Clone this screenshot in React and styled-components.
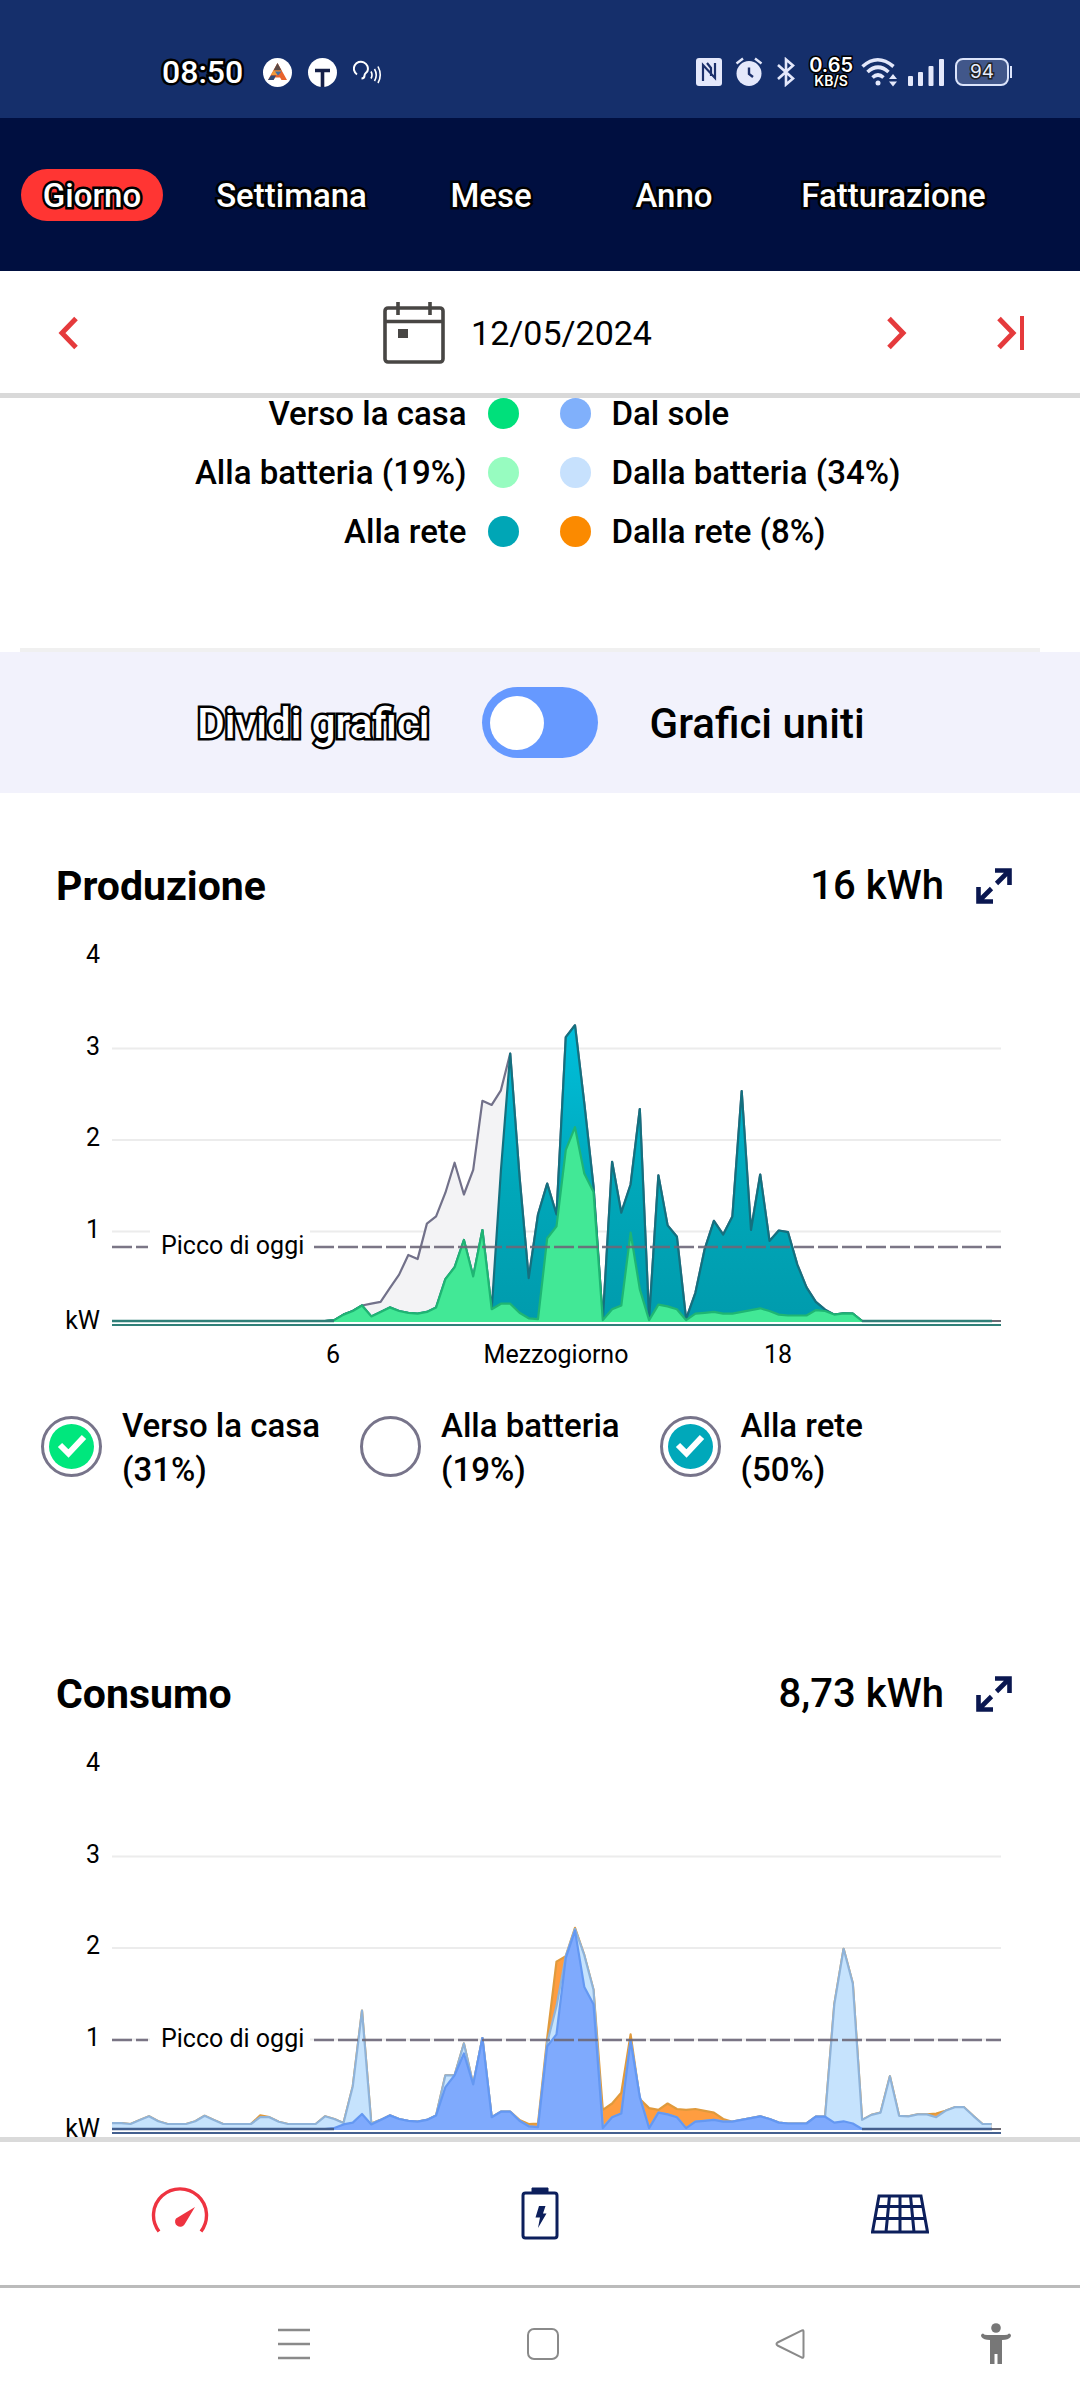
import React, { useState } from "react";
import styled, { createGlobalStyle, css } from "styled-components";

const GlobalStyle = createGlobalStyle`
  *, *::before, *::after { box-sizing: border-box; }
  body {
    margin: 0;
    background: #fff;
    color: #000;
    font-family: Roboto, "Liberation Sans", sans-serif;
  }
  button { font: inherit; color: inherit; background: none; border: 0; padding: 0; cursor: pointer; }
`;

const outline = css`
  -webkit-text-stroke: 5px #000;
  paint-order: stroke fill;
`;

const Page = styled.div`
  display: flex;
  flex-direction: column;
  height: 100vh;
`;

/* ---------- status bar ---------- */

const StatusBar = styled.div`
  display: flex;
  align-items: center;
  justify-content: space-between;
  height: 118px;
  padding: 26px 68px 0 162px;
  background: #152f6b;
  color: #fff;
  flex: none;
`;

const StatusGroup = styled.div`
  display: flex;
  align-items: center;
  gap: ${(p) => p.$gap}px;
`;

const Clock = styled.span`
  font-size: 32px;
  font-weight: 500;
  line-height: 36px;
  margin-right: 4px;
  ${outline}
`;

const Speed = styled.span`
  display: flex;
  flex-direction: column;
  align-items: center;
  font-family: Inter, "Open Sans", sans-serif;
  font-weight: 600;
  font-size: 20px;
  line-height: 18px;
  -webkit-text-stroke: 3px #000;
  paint-order: stroke fill;
`;

const SpeedUnit = styled.span`
  font-size: 14px;
  line-height: 14px;
`;

const BatteryLevel = styled.span`
  display: flex;
  align-items: center;
  justify-content: center;
  width: 54px;
  height: 28px;
  border: 2px solid #dbe4fb;
  border-radius: 8px;
  background: #41578a;
  color: #e6edff;
  font-family: Inter, "Open Sans", sans-serif;
  font-size: 19px;
  line-height: 22px;
  -webkit-text-stroke: 3px #222;
  paint-order: stroke fill;
`;

const BatteryTip = styled.span`
  width: 2px;
  height: 12px;
  margin-left: 1px;
  background: #dbe4fb;
`;

const Battery = styled.span`
  display: flex;
  align-items: center;
`;

/* ---------- period tabs ---------- */

const Periods = styled.nav`
  display: grid;
  grid-template-columns: 184fr 215fr 184fr 182fr 257fr;
  align-items: center;
  justify-items: center;
  height: 153px;
  padding-right: 58px;
  background: #000f40;
  flex: none;
`;

const Period = styled.button`
  height: 52px;
  padding: 1px 22px 0;
  border-radius: 26px;
  background: ${(p) => (p.$active ? "#ff3533" : "transparent")};
  color: #fff;
  font-size: 33px;
  font-weight: 500;
  line-height: 52px;
  ${outline}
`;

/* ---------- date row ---------- */

const DateBar = styled.div`
  display: flex;
  align-items: center;
  height: 127px;
  padding: 2px 39px 0 38px;
  border-bottom: 5px solid #d9d9d9;
  flex: none;
`;

const IconButton = styled.button`
  display: flex;
  align-items: center;
  justify-content: center;
  width: 60px;
  height: 60px;
`;

const DatePick = styled.button`
  display: flex;
  align-items: center;
  gap: 26px;
`;

const DateCenter = styled.div`
  display: flex;
  flex: 1;
  justify-content: center;
  padding-left: 70px;
`;

const DateText = styled.span`
  font-size: 34px;
  line-height: 40px;
`;

const DateNext = styled.div`
  display: flex;
  gap: 54px;
`;

/* ---------- scrolling content ---------- */

const Main = styled.main`
  flex: 1;
  min-height: 0;
  overflow-y: auto;
  scrollbar-width: none;
`;

const Legend = styled.div`
  display: grid;
  grid-template-columns: 1fr 1fr;
  gap: 28px 41px;
  padding: 0 2px 101px 0;
`;

const LegendItem = styled.div`
  display: flex;
  flex-direction: ${(p) => (p.$right ? "row-reverse" : "row")};
  align-items: center;
  gap: 21px;
  font-size: 33px;
  font-weight: 500;
  line-height: 31px;
`;

const Dot = styled.span`
  width: 31px;
  height: 31px;
  border-radius: 50%;
  background: ${(p) => p.$color};
`;

const Rule = styled.hr`
  height: 4px;
  margin: 0 40px 0 20px;
  border: 0;
  background: #f0f0f0;
`;

const SwitchBand = styled.div`
  display: flex;
  align-items: center;
  justify-content: center;
  gap: 52px;
  height: 141px;
  padding-right: 18px;
  background: #f2f2fc;
`;

const SwitchLabel = styled.label`
  padding-top: 2px;
  font-size: 42px;
  font-weight: 500;
  line-height: 48px;
  ${(p) =>
    p.$selected &&
    css`
      color: #fff;
      ${outline}
    `}
`;

const Switch = styled.input`
  appearance: none;
  display: flex;
  align-items: center;
  width: 116px;
  height: 71px;
  margin: 0;
  padding: 0 8px;
  border-radius: 36px;
  background: #6699ff;
  cursor: pointer;

  &::before {
    content: "";
    width: 54px;
    height: 54px;
    border-radius: 50%;
    background: #fff;
  }
  &:checked { justify-content: flex-end; }
`;

const Panel = styled.section`
  padding: 55px 0 109px;
`;

const PanelHead = styled.header`
  display: flex;
  align-items: center;
  height: 76px;
  padding: 0 56px;
`;

const PanelTitle = styled.h2`
  flex: 1;
  margin: 0;
  font-size: 41px;
  font-weight: 700;
  line-height: 48px;
`;

const PanelTotal = styled.span`
  margin-right: 20px;
  font-size: 40px;
  font-weight: 500;
  line-height: 48px;
`;

const ChartSvg = styled.svg`
  display: block;
  width: 100%;
  height: auto;
  font-family: Roboto, "Liberation Sans", sans-serif;
  font-size: 25px;
`;

const Filters = styled.div`
  display: flex;
  gap: 40px;
  margin-top: 20px;
  padding: 0 41px;
`;

const Filter = styled.label`
  display: flex;
  align-items: center;
  gap: 20px;
  font-size: 33px;
  font-weight: 500;
  line-height: 44px;
  cursor: pointer;
`;

const FilterText = styled.span`
  display: flex;
  flex-direction: column;
  padding-top: 4px;
`;

const CheckBox = styled.span`
  display: grid;
  place-items: center;
  > * { grid-area: 1 / 1; }
  svg { pointer-events: none; }
`;

const CheckInput = styled.input`
  appearance: none;
  width: 61px;
  height: 61px;
  margin: 0;
  border: 3px solid #77748a;
  border-radius: 50%;
  cursor: pointer;

  &:checked {
    padding: 5px;
    background: ${(p) => p.$color} content-box;
  }
`;

/* ---------- bottom bars ---------- */

const TabBar = styled.nav`
  display: grid;
  grid-template-columns: repeat(3, 1fr);
  height: 151px;
  border-top: 5px solid #dadada;
  border-bottom: 3px solid #bbb;
  background: #fff;
  flex: none;
`;

const Tab = styled.button`
  display: flex;
  align-items: center;
  justify-content: center;
`;

const SystemBar = styled.div`
  display: grid;
  grid-template-columns: 170fr 248fr 250fr 244fr 168fr;
  align-items: center;
  height: 112px;
  flex: none;
`;

const SystemButton = styled.button`
  display: flex;
  align-items: center;
  justify-content: center;
  height: 60px;
`;

/* ---------- chart data (kW, one value every 15 minutes) ---------- */

const pad = (lead, values) => {
  const row = [...Array(lead).fill(0), ...values];
  while (row.length < 96) row.push(0);
  return row;
};

const toHome = pad(24, [
  0.01, 0.07, 0.11, 0.17, 0.05, 0.1, 0.15, 0.11, 0.09, 0.08, 0.1, 0.15, 0.46, 0.59, 0.89, 0.49, 1.0, 0.13, 0.19, 0.19,
  0.09, 0.03, 0.02, 0.91, 1.04, 1.88, 2.13, 1.62, 1.42, 0.01, 0.13, 0.17, 0.97, 0.35, 0.01, 0.18, 0.16, 0.13, 0.01,
  0.08, 0.09, 0.1, 0.08, 0.08, 0.1, 0.12, 0.14, 0.11, 0.07, 0.06, 0.06, 0.06, 0.12, 0.11, 0.07, 0.085, 0.08, 0,
]);

const toGridTail = [
  1.59, 0.47, 1.17, 1.51, 1.17, 3.12, 3.25, 2.39, 1.48, 0.01, 1.75, 1.19, 1.5, 2.33, 0.02, 1.6, 1.05, 0.925, 0.02, 0.31,
  0.79, 1.1, 0.95, 1.15, 2.525, 1.0, 1.61, 0.88, 0.995, 0.976, 0.62, 0.37, 0.21, 0.125, 0.07, 0.085, 0.08, 0,
];

const toGrid = pad(0, [...toHome.slice(0, 42), 1.65, 2.94, ...toGridTail]);

const produced = pad(24, [
  0.01, 0.07, 0.11, 0.17, 0.19, 0.21, 0.36, 0.51, 0.725, 0.68, 1.07, 1.15, 1.41, 1.74, 1.39, 1.66, 2.42, 2.375, 2.535,
  2.94, ...toGridTail,
]);

const fromSun = pad(0, [
  ...toHome.slice(0, 25), 0.05, 0.07, 0.165, 0.05, ...toHome.slice(29, 38), 0.83, ...toHome.slice(39, 50), 2.18, 1.56,
  1.37, ...toHome.slice(53, 76), 0.135, 0.135, 0.07, 0.085, 0.06,
]);

const fromBattery = pad(0, [
  0.065, 0.065, 0.055, 0.1, 0.14, 0.085, 0.055, 0.055, 0.055, 0.085, 0.145, 0.1, 0.055, 0.055, 0.055, 0.055, 0.13, 0.13,
  0.08, 0.055, 0.055, 0.055, 0.055, 0.14, 0.11, 0.065, 0.47, 1.3, 0.06, ...fromSun.slice(29, 36), 0.59, 0.59, 0.94,
  ...fromSun.slice(39, 47), 0.95, 1.35, 1.9, 2.2, 1.91, 1.53, 0.02, ...fromSun.slice(54, 77), 0.135, 1.37, 1.98, 1.6, 0.1,
  0.155, 0.18, 0.58, 0.145, 0.14, 0.16, 0.16, 0.13, 0.2, 0.24, 0.24, 0.145, 0.055, 0.055,
]);

const fromGrid = fromBattery.map((v, i) => {
  const extra = {
    16: 0.15, 44: 0.1, 45: 0.055, 46: 0.06, 47: 1.0, 48: 1.84, 49: 1.9, 50: 2.21, 53: 0.21, 54: 0.28, 55: 0.4, 56: 1.04,
    57: 0.33, 58: 0.23, 59: 0.21, 60: 0.28, 61: 0.22, 62: 0.21, 63: 0.22, 64: 0.2, 65: 0.18, 66: 0.11, 89: 0.17,
  };
  return extra[i] ?? v;
});

const LEFT = 112;
const RIGHT = 1001;
const ZERO = 397;
const UNIT = 91;
const STEP = (RIGHT - LEFT) / 96;

const linePath = (values) =>
  values
    .map((v, i) => `${i ? "L" : "M"}${(LEFT + i * STEP).toFixed(1)} ${(ZERO - v * UNIT).toFixed(1)}`)
    .join("");

function Area({ values, fill, stroke }) {
  const d = linePath(values);
  return (
    <>
      <path d={`${d}V${ZERO + 1}H${LEFT}Z`} fill={fill} />
      <path d={d} fill="none" stroke={stroke} strokeWidth="2.2" strokeLinejoin="round" />
    </>
  );
}

function Chart({ label, peak, areas, axisColor, flatSpans }) {
  return (
    <ChartSvg viewBox="0 0 1080 456" role="img" aria-label={label}>
      <defs>
        <linearGradient id="tealFade" gradientUnits="userSpaceOnUse" x1="0" y1="100" x2="0" y2="398">
          <stop offset="0" stopColor="#00bfdc" />
          <stop offset="0.55" stopColor="#00a7b9" />
          <stop offset="1" stopColor="#009bad" />
        </linearGradient>
      </defs>
      {[1, 2, 3].map((n) => (
        <path key={n} d={`M${LEFT} ${399 - n * 91.5}H${RIGHT}`} stroke="#ececec" strokeWidth="2" />
      ))}
      <path d={`M${LEFT} ${ZERO}H${RIGHT}`} stroke="#6c6a74" strokeWidth="2" />
      {areas.map((a) => (
        <Area key={a.stroke} {...a} />
      ))}
      <path d={flatSpans} stroke={axisColor} strokeWidth="2.400" />
      <path d={`M${LEFT} 401H${RIGHT}`} stroke={axisColor} strokeWidth="2" />
      <rect x="150" y={peak - 18} width="160" height="34" fill="#fff" />
      <path d={`M${LEFT} ${peak}H148M314 ${peak}H${RIGHT}`} stroke="#6d6879" strokeWidth="2.400" strokeDasharray="20 4" opacity="0.9" />
      <text x="161" y={peak + 7}>Picco di oggi</text>
      <g textAnchor="end">
        {[4, 3, 2, 1].map((n) => (
          <text key={n} x="100" y={405 - n * 91.5}>{n}</text>
        ))}
        <text x="100" y="405">kW</text>
      </g>
      <g textAnchor="middle">
        <text x="333" y="439">6</text>
        <text x="556" y="439">Mezzogiorno</text>
        <text x="778" y="439">18</text>
      </g>
    </ChartSvg>
  );
}

/* ---------- icons ---------- */

const Chevron = ({ flip, end }) => (
  <svg width="36" height="36" viewBox="0 0 36 36" fill="none" stroke="#e53a3c" strokeWidth="5">
    {flip ? <path d="M26 3.500 12 18l14 14.500" /> : <path d={end ? "M6 3.500 20 18 6 32.500" : "M10 3.500 24 18 10 32.500"} />}
    {end && <path d="M29 1v34" strokeWidth="4" />}
  </svg>
);

const CalendarIcon = () => (
  <svg width="62" height="62" viewBox="0 0 62 62" fill="none" stroke="#484644" strokeWidth="3.600">
    <rect x="2" y="6" width="58" height="54" rx="3" />
    <path d="M3 19.500h56M15 0v13M47 0v13" />
    <rect x="15" y="27" width="10" height="9" fill="#484644" stroke="none" />
  </svg>
);

const ExpandIcon = () => (
  <svg width="36" height="36" viewBox="0 0 36 36" fill="none" stroke="#0a1750" strokeWidth="4.600">
    <path d="M19 2.500h14.500V17M33 3 20.500 15.500M2.500 19v14.500H17M3 33l12.500-12.500" />
  </svg>
);

const TriangleBadge = () => (
  <svg width="29" height="29" viewBox="0 0 29 29">
    <circle cx="14.500" cy="14.500" r="14.500" fill="#fff" />
    <path d="M14.500 5 5 22h5.500l1.500-2.500h5L18.500 22H24z" fill="#e8632b" />
    <path d="M14.500 5 10.500 12.500h8z" fill="#5b4a46" />
    <path d="M10.500 12.500 8 17h6l4.500-4.500z" fill="#f0983a" />
    <path d="M8 17.500 5 22h5.500l2.500-4.500z" fill="#2d4a78" />
    <path d="M12 13.500h6.500l-3.500 4z" fill="#3f6fa6" />
  </svg>
);

const TBadge = () => (
  <svg width="29" height="29" viewBox="0 0 29 29">
    <circle cx="14.500" cy="14.500" r="14.500" fill="#fff" />
    <path d="M7 12.500h15M14.500 12v17" stroke="#152048" strokeWidth="3.600" />
  </svg>
);

const VoiceIcon = () => (
  <svg width="29" height="24" viewBox="0 0 29 24" fill="none" stroke="#fff" strokeWidth="2">
    <path d="M4 14.500A7 7 0 1 1 14.500 11c-1 2-3 2-3 4.500 0 2-1 3-3 3" />
    <path d="M18 11.500q2 3.500 0 7M21.500 9q3.500 6 0 12M25 6.500q4.500 8.500 0 16.500" strokeWidth="1.600" />
  </svg>
);

const NfcIcon = () => (
  <svg width="26" height="28" viewBox="0 0 26 28">
    <rect width="26" height="28" rx="3" fill="#e4e8fb" />
    <path d="M7 23V7l12 13V5M11 5l4 5v8" fill="none" stroke="#1b2f6b" strokeWidth="2.200" />
  </svg>
);

const AlarmIcon = () => (
  <svg width="28" height="30" viewBox="0 0 28 30">
    <circle cx="14" cy="16.500" r="12.500" fill="#e4e8fb" />
    <path d="M1.500 6.500 8 1.500M26.500 6.500 20 1.500" stroke="#e4e8fb" strokeWidth="2.400" />
    <path d="M14 10.500V17l4 3" fill="none" stroke="#1b2f6b" strokeWidth="2.400" />
  </svg>
);

const BluetoothIcon = () => (
  <svg width="20" height="30" viewBox="0 0 20 30" fill="none" stroke="#e4e8fb" strokeWidth="2.600">
    <path d="M2 8 17 21.500 10 27.500V2.500L17 8.500 2 22" />
  </svg>
);

const WifiIcon = () => (
  <svg width="36" height="30" viewBox="0 0 36 30" fill="none" stroke="#e4e8fb" strokeWidth="3.600">
    <path d="M1.500 9.500q15-13.500 31 0M6.500 15q10.500-9.500 21 0M11.500 20.500q5.500-5 11 0" />
    <circle cx="17" cy="26" r="2.500" fill="#e4e8fb" stroke="none" />
    <path d="M28 22l4-5 4 5zM28 24.500l4 5 4-5z" fill="#e4e8fb" stroke="none" />
  </svg>
);

const SignalIcon = () => (
  <svg width="36" height="27" viewBox="0 0 36 27" fill="#e4e8fb">
    <rect x="0" y="17" width="5" height="10" rx="1" />
    <rect x="10" y="13" width="5" height="14" rx="1" />
    <rect x="20.500" y="7" width="5" height="20" rx="1" />
    <rect x="31" y="0" width="5" height="27" rx="1" />
  </svg>
);

const CheckIcon = () => (
  <svg width="30" height="26" viewBox="0 0 30 26" fill="none" stroke="#fff" strokeWidth="6">
    <path d="M3 12l8.500 8.500L27 4" />
  </svg>
);

const GaugeIcon = () => (
  <svg width="58" height="58" viewBox="0 0 58 58">
    <path d="M8 46.500A26.500 26.500 0 1 1 50 46.500" fill="none" stroke="#ee3340" strokeWidth="3.400" />
    <path d="M44 22 33.500 39.500a5 5 0 1 1-8.500-6z" fill="#ee3340" />
  </svg>
);

const StorageIcon = () => (
  <svg width="38" height="54" viewBox="0 0 38 54">
    <rect x="2" y="6" width="34" height="45" rx="2.500" fill="none" stroke="#0c1f5c" strokeWidth="3" />
    <path d="M11 5V1h16v4z" fill="#0c1f5c" stroke="#0c1f5c" />
    <path d="M18 19h6.500l-2.500 7.500h3.500L17 41l2-10.500h-4.500z" fill="#0c1f5c" />
  </svg>
);

const SolarIcon = () => (
  <svg width="58" height="40" viewBox="0 0 58 40" fill="none" stroke="#0c1f5c" strokeWidth="3">
    <path d="M8 2h42l6.500 36h-55zM6 12.500h46M4 24.500h50M18.500 2 15 38M29 2v36M39.500 2 43 38" />
  </svg>
);

const MenuLines = () => (
  <svg width="32" height="32" viewBox="0 0 32 32" stroke="#8a8a8a" strokeWidth="2.400">
    <path d="M0 2h32M0 16h32M0 30h32" />
  </svg>
);

const HomeSquare = () => (
  <svg width="32" height="32" viewBox="0 0 32 32" fill="none" stroke="#8a8a8a" strokeWidth="2">
    <rect x="1" y="1" width="30" height="30" rx="6" />
  </svg>
);

const BackTriangle = () => (
  <svg width="30" height="32" viewBox="0 0 30 32" fill="none" stroke="#8a8a8a" strokeWidth="2" strokeLinejoin="round">
    <path d="M28.500 3.500v25q0 2-2 .8L2.500 17.500q-2-1.500 0-3l24-11.800q2-1.200 2 .8z" />
  </svg>
);

const PersonIcon = () => (
  <svg width="32" height="42" viewBox="0 0 32 42" fill="#777">
    <circle cx="16" cy="5" r="4.800" />
    <path d="M3 10.500q-3 1-1.500 3.500Q3.500 17 10 17v24h4.500V31h3v10H22V17q6.500 0 8.500-3 1.500-2.500-1.500-3.500-1.500 2-6 1.500H9q-4.500.5-6-1.500z" />
  </svg>
);

/* ---------- page ---------- */

const periods = ["Giorno", "Settimana", "Mese", "Anno", "Fatturazione"];

const legend = [
  ["Verso la casa", "#00e07b", "Dal sole", "#80b0fb"],
  ["Alla batteria (19%)", "#97fcc0", "Dalla batteria (34%)", "#c7e1fd"],
  ["Alla rete", "#00a6b6", "Dalla rete (8%)", "#fb8a00"],
];

const filters = [
  ["home", "Verso la casa", "(31%)", "#00e77d"],
  ["battery", "Alla batteria", "(19%)", "#97fcc0"],
  ["grid", "Alla rete", "(50%)", "#00a8ba"],
];

function PanelHeader({ title, total }) {
  return (
    <PanelHead>
      <PanelTitle>{title}</PanelTitle>
      <PanelTotal>{total}</PanelTotal>
      <IconButton aria-label={`Espandi ${title}`}>
        <ExpandIcon />
      </IconButton>
    </PanelHead>
  );
}

export default function App() {
  const [period, setPeriod] = useState("Giorno");
  const [joined, setJoined] = useState(false);
  const [shown, setShown] = useState({ home: true, battery: false, grid: true });

  const productionAreas = [
    { values: produced, fill: shown.battery ? "#97fcc0" : "#f3f3f5", stroke: "#72718a" },
    shown.grid && { values: toGrid, fill: "url(#tealFade)", stroke: "#14707f" },
    shown.home && { values: toHome, fill: "#42e896", stroke: "#1fb573" },
  ].filter(Boolean);

  return (
    <Page>
      <GlobalStyle />
      <StatusBar>
        <StatusGroup $gap={16}>
          <Clock>08:50</Clock>
          <TriangleBadge />
          <TBadge />
          <VoiceIcon />
        </StatusGroup>
        <StatusGroup $gap={8}>
          <StatusGroup $gap={13}>
            <NfcIcon />
            <AlarmIcon />
            <BluetoothIcon />
            <Speed>
              <span>0.65</span>
              <SpeedUnit>KB/S</SpeedUnit>
            </Speed>
          </StatusGroup>
          <StatusGroup $gap={11}>
            <WifiIcon />
            <SignalIcon />
            <Battery>
              <BatteryLevel>94</BatteryLevel>
              <BatteryTip />
            </Battery>
          </StatusGroup>
        </StatusGroup>
      </StatusBar>

      <Periods>
        {periods.map((p) => (
          <Period key={p} $active={p === period} onClick={() => setPeriod(p)}>
            {p}
          </Period>
        ))}
      </Periods>

      <DateBar>
        <IconButton aria-label="Giorno precedente">
          <Chevron flip />
        </IconButton>
        <DateCenter>
          <DatePick>
            <CalendarIcon />
            <DateText>12/05/2024</DateText>
          </DatePick>
        </DateCenter>
        <DateNext>
          <IconButton aria-label="Giorno successivo">
            <Chevron />
          </IconButton>
          <IconButton aria-label="Oggi">
            <Chevron end />
          </IconButton>
        </DateNext>
      </DateBar>

      <Main>
        <Legend>
          {legend.map(([left, leftColor, right, rightColor]) => (
            <React.Fragment key={left}>
              <LegendItem $right>
                <Dot $color={leftColor} />
                {left}
              </LegendItem>
              <LegendItem>
                <Dot $color={rightColor} />
                {right}
              </LegendItem>
            </React.Fragment>
          ))}
        </Legend>
        <Rule />
        <SwitchBand>
          <SwitchLabel htmlFor="joined" $selected={!joined}>Dividi grafici</SwitchLabel>
          <Switch id="joined" type="checkbox" role="switch" checked={joined} onChange={() => setJoined(!joined)} />
          <SwitchLabel htmlFor="joined" $selected={joined}>Grafici uniti</SwitchLabel>
        </SwitchBand>

        <Panel>
          <PanelHeader title="Produzione" total="16 kWh" />
          <Chart
            label="Produzione"
            peak={323}
            areas={productionAreas}
            axisColor="#2f7f78"
            flatSpans="M112 397H334M862 397H992"
          />
          <Filters>
            {filters.map(([id, name, share, color]) => (
              <Filter key={id}>
                <CheckBox>
                  <CheckInput
                    type="checkbox"
                    $color={color}
                    checked={shown[id]}
                    onChange={() => setShown({ ...shown, [id]: !shown[id] })}
                  />
                  {shown[id] && <CheckIcon />}
                </CheckBox>
                <FilterText>
                  <span>{name}</span>
                  <span>{share}</span>
                </FilterText>
              </Filter>
            ))}
          </Filters>
        </Panel>

        <Panel>
          <PanelHeader title="Consumo" total="8,73 kWh" />
          <Chart
            label="Consumo"
            peak={308}
            axisColor="#44608f"
            flatSpans="M112 397H334M862 397H992"
            areas={[
              { values: fromGrid, fill: "#ff9d40", stroke: "#e09a3c" },
              { values: fromBattery, fill: "#c6e3fd", stroke: "#8fb3d9" },
              { values: fromSun, fill: "#7faafd", stroke: "#6498f2" },
            ]}
          />
        </Panel>
      </Main>

      <TabBar>
        <Tab aria-label="Energia"><GaugeIcon /></Tab>
        <Tab aria-label="Batteria"><StorageIcon /></Tab>
        <Tab aria-label="Pannelli"><SolarIcon /></Tab>
      </TabBar>

      <SystemBar>
        <span />
        <SystemButton aria-label="Recenti"><MenuLines /></SystemButton>
        <SystemButton aria-label="Home"><HomeSquare /></SystemButton>
        <SystemButton aria-label="Indietro"><BackTriangle /></SystemButton>
        <SystemButton aria-label="Accessibilità"><PersonIcon /></SystemButton>
      </SystemBar>
    </Page>
  );
}
